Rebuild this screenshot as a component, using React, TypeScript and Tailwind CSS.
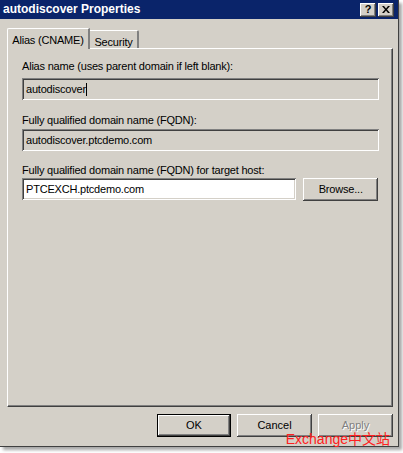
import React from "react";

const font = { fontFamily: '"Liberation Sans", Arial, sans-serif' };

const raised =
  "shadow-[inset_-1px_-1px_#404040,inset_1px_1px_#ffffff,inset_-2px_-2px_#808080,inset_2px_2px_#d4d0c8]";
const sunken =
  "shadow-[inset_1px_1px_#808080,inset_-1px_-1px_#ffffff,inset_2px_2px_#404040,inset_-2px_-2px_#d4d0c8]";

export default function App() {
  return (
    <div className="w-[403px] h-[453px] bg-white relative overflow-hidden" style={font}>
      <div className="w-[399px] h-[447px] bg-[#d4d0c8] flex flex-col border-r border-b border-[#404040] shadow-[3px_3px_3px_rgba(0,0,0,0.35)]">
        {/* title bar */}
        <div className="h-[19px] bg-[#0a246a] flex items-center justify-between pl-[3px] pr-[4px] shrink-0">
          <span className="text-white font-bold text-[12px] leading-[19px] whitespace-nowrap">autodiscover Properties</span>
          <div className="flex gap-[2px]">
            <div className={`w-[16px] h-[14px] bg-[#d4d0c8] ${raised} flex items-center justify-center text-black font-bold text-[11px] leading-none`}>?</div>
            <div className={`w-[16px] h-[14px] bg-[#d4d0c8] ${raised} flex items-center justify-center`}>
              <svg width="8" height="7" viewBox="0 0 8 7">
                <path d="M0 0h2l2 2.5L6 0h2L5 3.5 8 7H6L4 4.5 2 7H0l3-3.5z" fill="#000" />
              </svg>
            </div>
          </div>
        </div>

        {/* tabs */}
        <div className="flex items-end pl-[7px] mt-[9px] h-[21px] relative z-10">
          <div className="h-[21px] w-[83px] bg-[#d4d0c8] border-l border-t border-white rounded-tl-[2px] border-r-2 border-r-[#808080] flex items-start justify-center pt-[3px] text-[11px] text-black whitespace-nowrap tracking-[-0.2px]">
            Alias (CNAME)
          </div>
          <div className="h-[18px] w-[49px] bg-[#d4d0c8] border-t border-white border-r-2 border-r-[#808080] rounded-tr-[2px] flex items-start justify-center pt-[3px] text-[11px] text-black mb-[1px] whitespace-nowrap tracking-[-0.2px]">
            Security
          </div>
        </div>

        {/* panel */}
        <div className="mx-[7px] -mt-[1px] h-[359px] w-[386px] border-l border-t border-white border-r border-b border-r-[#404040] border-b-[#404040] shadow-[inset_-1px_-1px_#808080] px-[14px] pt-[11px] flex flex-col text-[11px] text-black tracking-[-0.2px]">
          <div className="h-[13px] leading-[13px] whitespace-nowrap">Alias name (uses parent domain if left blank):</div>
          <div className={`mt-[5px] h-[22px] w-[357px] bg-[#d4d0c8] ${sunken} flex items-center pl-[4px]`}>
            autodiscover<span className="inline-block w-[1px] h-[13px] bg-black" />
          </div>
          <div className="mt-[14px] h-[13px] leading-[13px] whitespace-nowrap">Fully qualified domain name (FQDN):</div>
          <div className={`mt-[2px] h-[22px] w-[357px] bg-[#d4d0c8] ${sunken} flex items-center pl-[4px]`}>
            autodiscover.ptcdemo.com
          </div>
          <div className="mt-[13px] h-[13px] leading-[13px] whitespace-nowrap">Fully qualified domain name (FQDN) for target host:</div>
          <div className="mt-[1px] flex gap-[7px]">
            <div className={`h-[22px] w-[276px] bg-white ${sunken} flex items-center pl-[4px]`}>
              PTCEXCH.ptcdemo.com
            </div>
            <div className={`h-[23px] w-[75px] ${raised} flex items-center justify-center`}>Browse...</div>
          </div>
        </div>

        {/* buttons */}
        <div className="flex justify-end gap-[6px] pr-[5px] mt-[7px] relative text-[11px]">
          <div className="h-[23px] w-[74px] border border-black">
            <div className={`w-full h-full ${raised} flex items-center justify-center text-black`}>OK</div>
          </div>
          <div className={`h-[23px] w-[75px] ${raised} flex items-center justify-center text-black`}>Cancel</div>
          <div className={`h-[23px] w-[75px] ${raised} flex items-center justify-center text-[#808080] [text-shadow:1px_1px_#ffffff]`}>Apply</div>
          <span
            className="absolute right-[8px] top-[18px] text-[14px] leading-none text-[#ff2020] whitespace-nowrap"
            style={{ fontFamily: '"Liberation Sans", "Noto Sans CJK SC", sans-serif' }}
          >
            Exchange中文站
          </span>
        </div>
      </div>
    </div>
  );
}
